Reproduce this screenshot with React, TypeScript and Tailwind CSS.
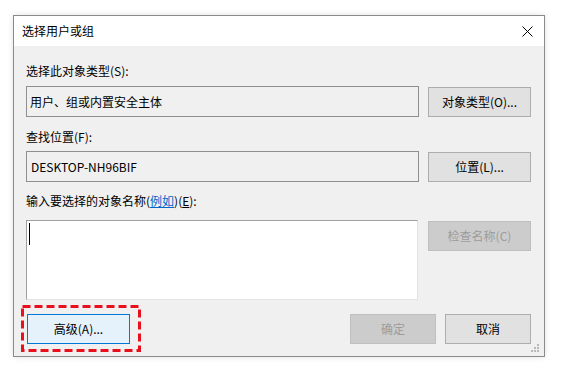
import React from "react";

const font = { fontFamily: '"Noto Sans CJK SC", "Noto Sans", sans-serif' };

function Btn({
  children,
  w,
  variant = "normal",
}: {
  children: React.ReactNode;
  w: string;
  variant?: "normal" | "disabled" | "focus";
}) {
  const cls =
    variant === "disabled"
      ? "bg-[#cccccc] border-[#bfbfbf] text-[#9c9c9c]"
      : variant === "focus"
      ? "bg-[#e5f1fb] border-[#0078d7] text-black"
      : "bg-[#e1e1e1] border-[#adadad] text-black";
  return (
    <div
      className={`${w} h-[30px] border flex items-center justify-center text-[12px] leading-[16px] ${cls}`}
    >
      {children}
    </div>
  );
}

export default function App() {
  return (
    <div className="w-[561px] h-[372px] bg-white pt-[15px] pl-[13px]" style={font}>
      <div className="w-[532px] h-[342px] border border-[#8a8a8a] flex flex-col bg-[#f0f0f0] shadow-[0_0_6px_rgba(0,0,0,0.12)]">
        {/* Title bar */}
        <div className="h-[30px] bg-white flex items-center justify-between pl-[8px] pr-[11px] shrink-0">
          <span className="text-[12px] leading-[16px] text-black">选择用户或组</span>
          <svg width="11" height="11" viewBox="0 0 11 11">
            <path d="M0.5 0.5 L10.5 10.5 M10.5 0.5 L0.5 10.5" stroke="#000" strokeWidth="1" fill="none" />
          </svg>
        </div>
        {/* Body */}
        <div className="flex-1 flex flex-col pl-[12px] pr-[13px] pt-[17px] relative">
          <div className="text-[12px] leading-[16px] text-black">选择此对象类型(S):</div>
          <div className="flex items-center mt-[7px]">
            <div className="w-[393px] h-[31px] border border-[#8f8f8f] flex items-center pl-[3px] text-[12px] leading-[16px] text-black">
              用户、组或内置安全主体
            </div>
            <div className="ml-[9px]">
              <Btn w="w-[103px]">对象类型(O)...</Btn>
            </div>
          </div>

          <div className="text-[12px] leading-[16px] text-black mt-[12px]">查找位置(F):</div>
          <div className="flex items-center mt-[6px]">
            <div className="w-[393px] h-[31px] border border-[#8f8f8f] flex items-center pl-[4px] text-[12px] leading-[16px] text-black">
              DESKTOP-NH96BIF
            </div>
            <div className="ml-[9px]">
              <Btn w="w-[103px]">位置(L)...</Btn>
            </div>
          </div>

          <div className="text-[12px] leading-[16px] text-black mt-[11px]">
            输入要选择的对象名称(<span className="text-[#0066cc] underline">例如</span>)(<span className="underline">E</span>):
          </div>
          <div className="flex items-start mt-[11px]">
            <div className="w-[392px] h-[80px] bg-white border border-t-[#a0a0a0] border-l-[#a0a0a0] border-r-[#e3e3e3] border-b-[#e3e3e3] pl-[2px] pt-[2px]">
              <div className="w-px h-[22px] bg-black" />
            </div>
            <div className="ml-[10px] mt-px">
              <Btn w="w-[103px]" variant="disabled">检查名称(C)</Btn>
            </div>
          </div>

          <div className="flex items-center mt-[14px]">
            <div className="relative ml-px">
              <Btn w="w-[103px]" variant="focus">高级(A)...</Btn>
              <svg
                className="absolute -left-[6px] -top-[9px]"
                width="120"
                height="47"
                viewBox="0 0 120 47"
              >
                <rect
                  x="1.5"
                  y="1.5"
                  width="117"
                  height="44"
                  fill="none"
                  stroke="#e8101c"
                  strokeWidth="3"
                  strokeDasharray="8 4"
                />
              </svg>
            </div>
            <div className="ml-auto flex gap-[9px]">
              <Btn w="w-[86px]" variant="disabled">确定</Btn>
              <Btn w="w-[86px]">取消</Btn>
            </div>
          </div>

          {/* resize grip */}
          <svg className="absolute right-[4px] bottom-[3px]" width="9" height="9" viewBox="0 0 9 9">
            <rect x="6" y="0" width="2" height="2" fill="#b8b8b8" />
            <rect x="3" y="3" width="2" height="2" fill="#b8b8b8" />
            <rect x="6" y="3" width="2" height="2" fill="#b8b8b8" />
            <rect x="0" y="6" width="2" height="2" fill="#b8b8b8" />
            <rect x="3" y="6" width="2" height="2" fill="#b8b8b8" />
            <rect x="6" y="6" width="2" height="2" fill="#b8b8b8" />
          </svg>
        </div>
      </div>
    </div>
  );
}
